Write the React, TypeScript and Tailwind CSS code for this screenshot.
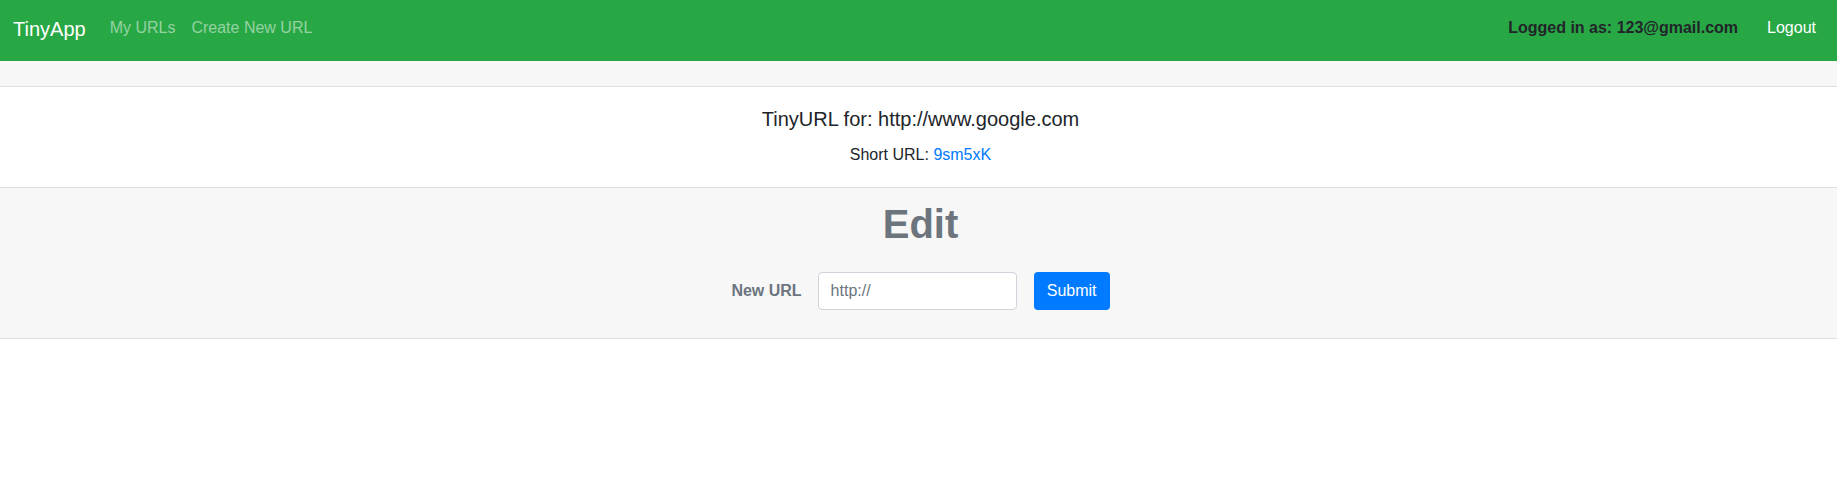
import React from 'react';

const font = { fontFamily: '"Liberation Sans", Arial, sans-serif' };

function Navbar() {
  return (
    <nav className="flex h-[61px] items-start bg-[#28a745] pl-[13px] pr-[21px]">
      <a href="#" className="pt-[14px] text-[20px] leading-[30px] text-white">
        TinyApp
      </a>
      <div className="ml-[24px] flex gap-[16px] pt-[16px] text-[16px] leading-6 text-white/50">
        <a href="#">My URLs</a>
        <a href="#">Create New URL</a>
      </div>
      <div className="ml-auto flex gap-[29px] pt-[16px] text-[16px] leading-6">
        <span className="font-bold text-[#212529]">Logged in as: 123@gmail.com</span>
        <a href="#" className="text-white">Logout</a>
      </div>
    </nav>
  );
}

export default function App() {
  return (
    <div className="min-h-screen bg-white text-[#212529]" style={font}>
      <Navbar />
      <div className="border-b border-[#dfdfdf] bg-[#f7f7f7] h-[26px]" />
      <div className="border-b border-[#dfdfdf] py-5 pl-[4px] text-center">
        <h5 className="mb-3 text-[20px] leading-6">TinyURL for: http://www.google.com</h5>
        <p className="text-[16px] leading-6">
          Short URL: <a href="#" className="text-[#007bff]">9sm5xK</a>
        </p>
      </div>
      <div className="border-b border-[#dfdfdf] bg-[#f7f7f7] pl-[4px] pt-3 pb-[28px] text-center">
        <h1 className="text-[40px] font-bold leading-[48px] text-[#6c757d]">Edit</h1>
        <form className="mt-6 flex items-center justify-center" onSubmit={(e) => e.preventDefault()}>
          <label className="mr-4 text-[16px] font-bold text-[#6c757d]">New URL</label>
          <input
            type="text"
            placeholder="http://"
            className="h-[38px] w-[199px] rounded border border-[#ced4da] bg-white px-3 text-[16px] text-[#495057] placeholder:text-[#6c757d] outline-none"
          />
          <button
            type="submit"
            className="ml-[17px] h-[38px] w-[76px] rounded bg-[#007bff] text-[16px] text-white"
          >
            Submit
          </button>
        </form>
      </div>
    </div>
  );
}
